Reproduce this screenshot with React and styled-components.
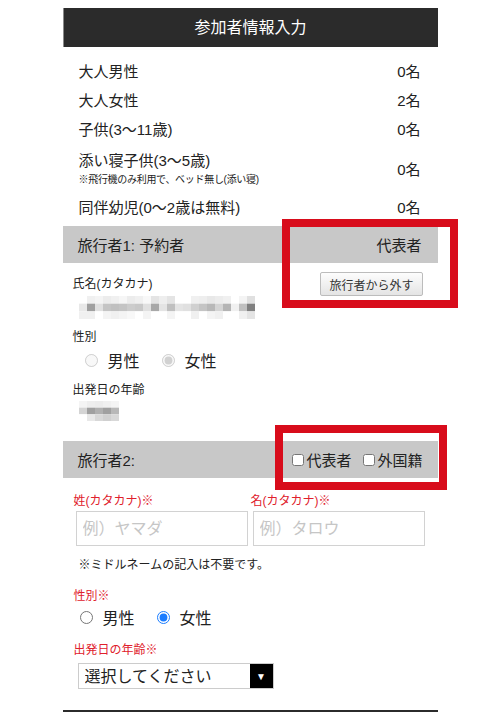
import React from "react";
import styled, { createGlobalStyle } from "styled-components";

const GlobalStyle = createGlobalStyle`
  * {
    box-sizing: border-box;
  }
  body {
    margin: 0;
    background: #fff;
    color: #222;
    font-family: "Liberation Sans", "Noto Sans CJK JP", sans-serif;
  }
`;

const counts = [
  { name: "大人男性", value: "0名" },
  { name: "大人女性", value: "2名" },
  { name: "子供(3〜11歳)", value: "0名" },
  { name: "添い寝子供(3〜5歳)", note: "※飛行機のみ利用で、ベッド無し(添い寝)", value: "0名" },
  { name: "同伴幼児(0〜2歳は無料)", value: "0名" },
];

// blurred name, 3 rows of 8px cells
const nameCells = [
  ["#fff", "#f0f0f0", "#f4f4f4", "#ececec", "#f0f0f0", "#f6f6f6", "#ececec", "#f0f0f0", "#f8f8f8", "#e4e4e4", "#eee", "#e4e4e4", "#fff", "#fff", "#f0f0f0", "#eee", "#e8e8e8", "#ececec", "#f0f0f0", "#fff", "#f4f4f4", "#e0e0e0"],
  ["#e8e8e8", "#a0a0a0", "#e0e0e0", "#c4c4c4", "#c0c0c0", "#c4c4c4", "#ccc", "#c8c8c8", "#e0e0e0", "#a8a8a8", "#e4e4e4", "#c0c0c0", "#e4e4e4", "#e0e0e0", "#d0d0d0", "#c4c4c4", "#b8b8b8", "#d4d4d4", "#b4b4b4", "#f0f0f0", "#c0c0c0", "#808080"],
  ["#f0f0f0", "#f0f0f0", "#fff", "#f4f4f4", "#f0f0f0", "#f4f4f4", "#f8f8f8", "#fff", "#f4f4f4", "#fff", "#fff", "#f4f4f4", "#fff", "#fff", "#f0f0f0", "#fff", "#f4f4f4", "#f0f0f0", "#fff", "#fff", "#f0f0f0", "#e4e4e4"],
];

const ageCells = [
  ["#f4f4f4", "#eee", "#ececec", "#f0f0f0", "#f4f4f4"],
  ["#d4d4d4", "#a0a0a0", "#b0b0b0", "#a0a0a0", "#b8b8b8"],
  ["#fff", "#e8e8e8", "#d8d8d8", "#d0d0d0", "#d8d8d8"],
];

const Mosaic = ({ cells, cell = 8, height }) => {
  const cols = cells[0].length;
  const rows = cells.length;
  return (
    <MosaicSvg
      width={cols * cell}
      height={height}
      viewBox={`0 0 ${cols * cell} ${rows * cell}`}
      preserveAspectRatio="none"
    >
      {cells.map((row, r) =>
        row.map((fill, c) => (
          <rect key={r + "-" + c} x={c * cell} y={r * cell} width={cell} height={cell} fill={fill} />
        ))
      )}
    </MosaicSvg>
  );
};

const App = () => {
  return (
    <>
      <GlobalStyle />
      <Page>
        <SectionHeader>参加者情報入力</SectionHeader>

        <CountList>
          {counts.map((row) => (
            <CountRow key={row.name} $tall={!!row.note}>
              <div>
                <CountName>{row.name}</CountName>
                {row.note && <CountNote>{row.note}</CountNote>}
              </div>
              <CountValue>{row.value}</CountValue>
            </CountRow>
          ))}
        </CountList>

        <Traveler $mt={4}>
          <Annotation $top={-7} $left={219} $w={176} $h={89} />
          <TravelerBar>
            <span>旅行者1: 予約者</span>
            <span>代表者</span>
          </TravelerBar>
          <Body>
            <NameRow>
              <FieldLabel>氏名(カタカナ)</FieldLabel>
              <RemoveButton type="button">旅行者から外す</RemoveButton>
            </NameRow>
            <Indent>
              <Mosaic cells={nameCells} height={23} />
            </Indent>
            <FieldLabel $mt={9}>性別</FieldLabel>
            <RadioGroup $indent={12} $mt={2}>
              <RadioOption>
                <input type="radio" name="sex1" disabled />
                男性
              </RadioOption>
              <RadioOption>
                <input type="radio" name="sex1" defaultChecked disabled />
                女性
              </RadioOption>
            </RadioGroup>
            <FieldLabel $mt={9}>出発日の年齢</FieldLabel>
            <Indent $mt={2}>
              <Mosaic cells={ageCells} height={20} />
            </Indent>
          </Body>
        </Traveler>

        <Traveler $mt={20}>
          <Annotation $top={-16} $left={212} $w={172} $h={65} />
          <TravelerBar>
            <span>旅行者2:</span>
            <Checks>
              <CheckOption>
                <input type="checkbox" />
                代表者
              </CheckOption>
              <CheckOption>
                <input type="checkbox" />
                外国籍
              </CheckOption>
            </Checks>
          </TravelerBar>
          <Body $pad={11} $padR={13}>
            <NameGrid>
              <div>
                <FieldLabel $required $mt={14} $shift={-2}>姓(カタカナ)※</FieldLabel>
                <TextInput placeholder="例）ヤマダ" />
              </div>
              <div>
                <FieldLabel $required $mt={14} $shift={-2}>名(カタカナ)※</FieldLabel>
                <TextInput placeholder="例）タロウ" />
              </div>
            </NameGrid>
            <Note>※ミドルネームの記入は不要です。</Note>
            <FieldLabel $required $mt={13}>性別※</FieldLabel>
            <RadioGroup $indent={6} $mt={0}>
              <RadioOption>
                <input type="radio" name="sex2" />
                男性
              </RadioOption>
              <RadioOption>
                <input type="radio" name="sex2" defaultChecked />
                女性
              </RadioOption>
            </RadioGroup>
            <FieldLabel $required $mt={12}>出発日の年齢※</FieldLabel>
            <SelectWrap>
              <Select defaultValue="">
                <option value="">選択してください</option>
              </Select>
              <SelectArrow>▼</SelectArrow>
            </SelectWrap>
          </Body>
        </Traveler>

        <NextHeader />
      </Page>
    </>
  );
};

const Page = styled.main`
  width: 375px;
  margin: 0 auto;
  padding-top: 8px;
`;

const SectionHeader = styled.h2`
  margin: 0;
  height: 39px;
  line-height: 39px;
  background: #2b2b2b;
  border-left: 1px solid #8a8a8a;
  color: #fff;
  font-size: 16px;
  font-weight: normal;
  text-align: center;
`;

const NextHeader = styled.div`
  height: 30px;
  margin-top: 21px;
  background: #2b2b2b;
`;

const CountList = styled.div`
  padding-top: 10px;
`;

const CountRow = styled.div`
  display: flex;
  justify-content: space-between;
  align-items: center;
  padding: ${(p) => (p.$tall ? "6px 16px 4px" : "4px 16px")};
  font-size: 15px;
  line-height: 21px;
`;

const CountName = styled.div``;

const CountNote = styled.div`
  font-size: 10px;
  line-height: 18px;
  letter-spacing: -0.3px;
`;

const CountValue = styled.div`
  padding-right: 1px;
`;

const Traveler = styled.section`
  position: relative;
  margin-top: ${(p) => p.$mt}px;
`;

const Annotation = styled.div`
  position: absolute;
  top: ${(p) => p.$top}px;
  left: ${(p) => p.$left}px;
  width: ${(p) => p.$w}px;
  height: ${(p) => p.$h}px;
  border: 8px solid #d80c1b;
  pointer-events: none;
  z-index: 2;
`;

const TravelerBar = styled.div`
  display: flex;
  justify-content: space-between;
  align-items: center;
  height: 37px;
  padding: 0 16px 0 15px;
  background: #c8c8c8;
  font-size: 15px;
`;

const Checks = styled.div`
  display: flex;
  gap: 12px;
  margin-right: -1px;
`;

const CheckOption = styled.label`
  display: inline-flex;
  align-items: center;
  font-size: 15px;

  input {
    width: 12px;
    height: 12px;
    margin: 0 2px 0 0;
  }
`;

const Body = styled.div`
  padding: 0 ${(p) => p.$padR || 15}px 0 ${(p) => p.$pad || 10}px;
`;

const NameRow = styled.div`
  display: flex;
  justify-content: space-between;
  align-items: center;
  margin-top: 9px;
`;

const FieldLabel = styled.div`
  margin-top: ${(p) => p.$mt || 0}px;
  margin-left: ${(p) => p.$shift || 0}px;
  color: ${(p) => (p.$required ? "#e0202c" : "#222")};
  font-size: 12px;
  line-height: 18px;
`;

const RemoveButton = styled.button`
  height: 24px;
  padding: 0 8px;
  background: linear-gradient(#fdfdfd, #e4e4e4);
  border: 1px solid #bcbcbc;
  border-radius: 2px;
  color: #333;
  font-family: inherit;
  font-size: 12px;
`;

const Indent = styled.div`
  margin-top: ${(p) => p.$mt || 0}px;
  padding-left: 6px;
  line-height: 0;
`;

const MosaicSvg = styled.svg`
  display: block;
`;

const RadioGroup = styled.div`
  display: flex;
  gap: 22px;
  margin-top: ${(p) => p.$mt}px;
  padding-left: ${(p) => p.$indent}px;
  height: 24px;
  align-items: center;
`;

const RadioOption = styled.label`
  display: inline-flex;
  align-items: center;
  gap: 10px;
  font-size: 16px;

  input {
    width: 13px;
    height: 13px;
    margin: 0;
    accent-color: #1a7cff;
  }
`;

const NameGrid = styled.div`
  display: grid;
  grid-template-columns: 1fr 1fr;
  column-gap: 5px;
  margin-left: 2px;
`;

const TextInput = styled.input`
  display: block;
  width: 100%;
  height: 35px;
  margin: 1px 0 0;
  padding: 0 6px;
  border: 1px solid #d2d2d2;
  border-radius: 0;
  font-family: inherit;
  font-size: 16px;

  &::placeholder {
    color: #c6c6c6;
  }
`;

const Note = styled.div`
  margin-top: 10px;
  padding-left: 5px;
  font-size: 12px;
  line-height: 18px;
`;

const SelectWrap = styled.div`
  display: flex;
  width: 196px;
  height: 26px;
  margin: 4px 0 0 4px;
  border: 1px solid #ccc;
`;

const Select = styled.select`
  flex: 1;
  min-width: 0;
  padding: 0 6px;
  border: 0;
  background: #fff;
  appearance: none;
  color: #222;
  font-family: inherit;
  font-size: 16px;
  outline: none;
`;

const SelectArrow = styled.span`
  display: flex;
  align-items: center;
  justify-content: center;
  width: 23px;
  background: #000;
  color: #fff;
  font-size: 10px;
`;

export default App;
